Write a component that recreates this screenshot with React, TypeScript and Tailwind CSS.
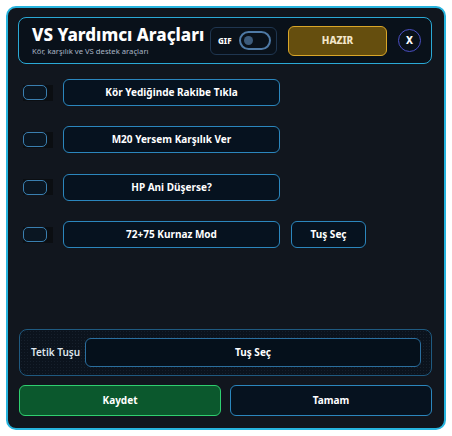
import { useState } from "react";

type Feature = {
  label: string;
  bindable?: boolean;
};

const features: Feature[] = [
  { label: "Kör Yediğinde Rakibe Tıkla" },
  { label: "M20 Yersem Karşılık Ver" },
  { label: "HP Ani Düşerse?" },
  { label: "72+75 Kurnaz Mod", bindable: true },
];

const Checkbox = ({ checked, onToggle }: { checked: boolean; onToggle: () => void }) => (
  <div className="flex h-[16px] w-[30px] items-center bg-[#0b0e12]">
    <button
      onClick={onToggle}
      className={`h-[15px] w-[24px] rounded-[5px] border border-[#3a7fb0] ${
        checked ? "bg-[#1d5f8a]" : "bg-[#0a1622]"
      }`}
    />
  </div>
);

const App = () => {
  const [gif, setGif] = useState(false);
  const [enabled, setEnabled] = useState<boolean[]>([false, false, false, false]);

  const toggle = (i: number) =>
    setEnabled((prev) => prev.map((v, idx) => (idx === i ? !v : v)));

  return (
    <div className="bg-white p-[6px] font-['Noto_Sans',sans-serif]">
      <div className="flex h-[424px] w-[440px] flex-col rounded-[10px] border-2 border-[#27b4de] bg-[#11161e] pb-[12px] pl-[10px] pr-[12px] pt-[9px]">
        {/* header */}
        <div className="flex h-[47px] items-center rounded-[8px] border border-[#2aa9d6] bg-[#09111a] pl-[13px] pr-[10px]">
          <div className="flex flex-1 flex-col">
            <h1 className="text-[17px] font-extrabold leading-[20px] text-white">
              VS Yardımcı Araçları
            </h1>
            <span className="mt-[1px] text-[7.7px] leading-[10px] text-[#a8b4c4]">
              Kör, karşılık ve VS destek araçları
            </span>
          </div>
          <div className="flex h-[28px] w-[67px] items-center gap-[7px] rounded-[6px] border border-[#1f3650] pl-[7px]">
            <span className="text-[8px] font-extrabold text-white">GIF</span>
            <button
              onClick={() => setGif(!gif)}
              className="flex h-[19px] w-[32px] items-center rounded-full border-2 border-[#4f7aa6] px-[3px]"
            >
              <span
                className={`h-[9px] w-[9px] rounded-full bg-[#3d5c7d] ${gif ? "ml-auto" : ""}`}
              />
            </button>
          </div>
          <button className="ml-[11px] h-[30px] w-[99px] rounded-[6px] border border-[#d9a628] bg-[#654e0e] text-[10px] font-extrabold text-[#f3e6c8]">
            HAZIR
          </button>
          <button className="ml-[11px] flex h-[23px] w-[23px] items-center justify-center rounded-full border border-[#4b4fc4] text-[10px] font-extrabold text-white">
            X
          </button>
        </div>

        {/* feature rows */}
        <div className="mt-[15px] flex flex-col gap-[20.4px] pl-[5px]">
          {features.map((f, i) => (
            <div key={f.label} className="flex h-[27px] items-center">
              <Checkbox checked={enabled[i]} onToggle={() => toggle(i)} />
              <button className="ml-[10px] h-[27px] w-[217px] rounded-[6px] border border-[#2b86bd] bg-[#06121f] text-[10px] font-bold text-white">
                {f.label}
              </button>
              {f.bindable && (
                <button className="ml-[11px] h-[27px] w-[75px] rounded-[6px] border border-[#2b86bd] bg-[#06121f] text-[10px] font-bold text-white">
                  Tuş Seç
                </button>
              )}
            </div>
          ))}
        </div>

        <div className="flex-1" />

        {/* trigger key */}
        <div className="ml-[1px] flex h-[47px] items-center rounded-[8px] border border-[#1f5a80] bg-[#0b131d] bg-[radial-gradient(#16202c_1px,transparent_1px)] bg-[length:3px_3px] pl-[11px] pr-[10px]">
          <span className="w-[54px] text-[10px] font-semibold text-[#dfe6ee]">Tetik Tuşu</span>
          <button className="h-[29px] flex-1 rounded-[6px] border border-[#2a6e9e] bg-[#05101b] text-[10px] font-bold text-white">
            Tuş Seç
          </button>
        </div>

        {/* footer */}
        <div className="ml-[1px] mt-[9px] flex gap-[9px]">
          <button className="h-[31px] flex-1 rounded-[6px] border border-[#2fcf6f] bg-[#0b582d] text-[10px] font-bold text-white">
            Kaydet
          </button>
          <button className="h-[31px] flex-1 rounded-[6px] border border-[#2b86bd] bg-[#06121f] text-[10px] font-bold text-white">
            Tamam
          </button>
        </div>
      </div>
    </div>
  );
};

export default App;
